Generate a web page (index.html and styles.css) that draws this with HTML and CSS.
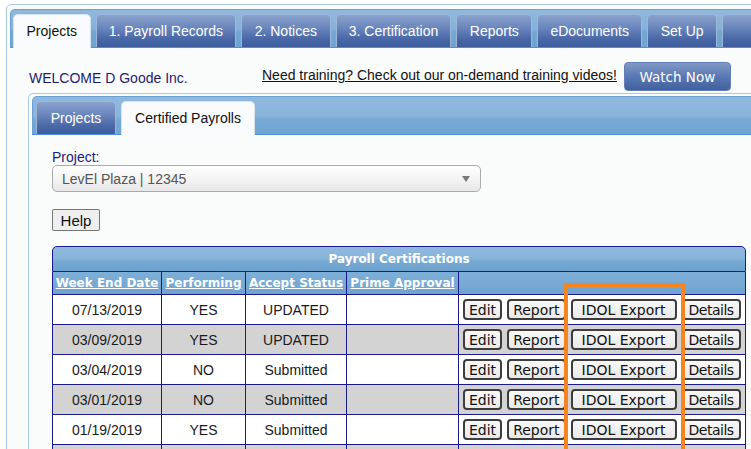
FILE: index.html
```html
<!DOCTYPE html>
<html>
<head>
<meta charset="utf-8">
<link rel="stylesheet" href="styles.css">
</head>
<body>
<div class="app">
  <div class="tabbar">
    <div class="tab active w-projects">Projects</div>
    <div class="tab w-payroll">1. Payroll Records</div>
    <div class="tab w-notices">2. Notices</div>
    <div class="tab w-cert">3. Certification</div>
    <div class="tab w-reports">Reports</div>
    <div class="tab w-edocs">eDocuments</div>
    <div class="tab w-setup">Set Up</div>
    <div class="tab w-more">&nbsp;</div>
  </div>
  <div class="welcome-row">
    <span class="welcome">WELCOME D Goode Inc.</span>
    <a class="training" href="#">Need training? Check out our on-demand training videos!</a>
    <button class="watch">Watch Now</button>
  </div>
  <div class="panel">
    <div class="subtabbar">
      <div class="tab sub w-subproj">Projects</div>
      <div class="tab sub active w-certpay">Certified Payrolls</div>
    </div>
    <div class="panel-body">
      <label class="proj-label">Project:</label>
      <div class="select">
        <span>LevEl Plaza | 12345</span>
        <span class="arrow"></span>
      </div>
      <button class="help">Help</button>
      <table class="grid">
        <colgroup>
          <col class="c1"><col class="c2"><col class="c3"><col class="c4"><col class="c5">
        </colgroup>
        <thead>
          <tr class="caption"><th colspan="5">Payroll Certifications</th></tr>
          <tr class="head">
            <th><a href="#">Week End Date</a></th>
            <th><a href="#">Performing</a></th>
            <th><a href="#">Accept Status</a></th>
            <th><a href="#">Prime Approval</a></th>
            <th></th>
          </tr>
        </thead>
        <tbody>
          <tr>
            <td>07/13/2019</td><td>YES</td><td>UPDATED</td><td></td>
            <td class="actions"><button class="b">Edit</button><button class="b">Report</button><button class="b wide">IDOL Export</button><button class="b last">Details</button></td>
          </tr>
          <tr class="alt">
            <td>03/09/2019</td><td>YES</td><td>UPDATED</td><td></td>
            <td class="actions"><button class="b">Edit</button><button class="b">Report</button><button class="b wide">IDOL Export</button><button class="b last">Details</button></td>
          </tr>
          <tr>
            <td>03/04/2019</td><td>NO</td><td>Submitted</td><td></td>
            <td class="actions"><button class="b">Edit</button><button class="b">Report</button><button class="b wide">IDOL Export</button><button class="b last">Details</button></td>
          </tr>
          <tr class="alt">
            <td>03/01/2019</td><td>NO</td><td>Submitted</td><td></td>
            <td class="actions"><button class="b">Edit</button><button class="b">Report</button><button class="b wide">IDOL Export</button><button class="b last">Details</button></td>
          </tr>
          <tr>
            <td>01/19/2019</td><td>YES</td><td>Submitted</td><td></td>
            <td class="actions"><button class="b">Edit</button><button class="b">Report</button><button class="b wide">IDOL Export</button><button class="b last">Details</button></td>
          </tr>
          <tr class="alt">
            <td></td><td></td><td></td><td></td><td class="actions"></td>
          </tr>
        </tbody>
      </table>
    </div>
  </div>
</div>
<div class="highlight"></div>
</body>
</html>
```
FILE: styles.css
```css
html, body {
  margin: 0;
  padding: 0;
  overflow: hidden;
  background: #ffffff;
  font-family: "Liberation Sans", Arial, sans-serif;
}
body {
  position: relative;
  height: 449px;
}
.app {
  margin: 4px 0 0 6px;
  width: 780px;
  height: 600px;
  border: 1px solid #a9cbe6;
  border-radius: 5px;
  padding: 4px 3px;
  box-sizing: border-box;
  background: #fafcfc;
}
.tabbar {
  display: flex;
  gap: 5px;
  height: 39px;
  box-sizing: border-box;
  padding: 4px 0 0 2px;
  border: 1px solid #6aa0d4;
  border-bottom: 1px solid #4f93d6;
  border-radius: 5px 5px 0 0;
  background: linear-gradient(#8fb9dd 0%, #86b1d8 50%, #73a7d2 60%, #6fa4d0 100%);
}
.tab {
  height: 33px;
  box-sizing: border-box;
  display: flex;
  align-items: center;
  justify-content: center;
  font-size: 14px;
  color: #ffffff;
  border: 1px solid #9db7d9;
  border-bottom: none;
  border-radius: 5px 5px 0 0;
  background: linear-gradient(#8aa2cc 0%, #6a86bd 40%, #4a68a7 75%, #3d5c9b 100%);
  white-space: nowrap;
  padding-bottom: 1px;
}
.tab.active {
  background: #f8fafb;
  color: #111111;
  border-color: #d6e4f0;
  height: 34px;
  margin-bottom: -1px;
}
.w-projects { width: 79px; }
.w-payroll { width: 143px; }
.w-notices { width: 91px; }
.w-cert { width: 118px; }
.w-reports { width: 77px; }
.w-edocs { width: 107px; }
.w-setup { width: 71px; }
.w-more { width: 60px; }
.w-subproj { width: 80px; }
.w-certpay { width: 134px; }

.welcome-row {
  display: flex;
  align-items: center;
  height: 29px;
  margin: 14px 0 2px 19px;
}
.welcome {
  width: 233px;
  flex: none;
  font-size: 14px;
  color: #1e1b6f;
  padding-top: 2px;
}
.training {
  font-size: 14px;
  color: #111111;
  text-decoration: underline;
  margin-top: -3px;
}
.watch {
  margin-left: 7px;
  width: 107px;
  height: 29px;
  border: 1px solid #5f7fb6;
  border-radius: 4px;
  background: linear-gradient(#8099c7 0%, #5d7bb5 45%, #40609f 100%);
  color: #ffffff;
  font-family: "DejaVu Sans", Verdana, sans-serif;
  font-size: 13.5px;
  padding: 0;
}

.panel {
  margin-left: 18px;
  border: 1px solid #a9cbe6;
  border-radius: 5px;
  padding: 2px 3px;
  height: 500px;
  box-sizing: border-box;
}
.subtabbar {
  display: flex;
  gap: 5px;
  height: 39px;
  box-sizing: border-box;
  padding: 4px 0 0 3px;
  border: 1px solid #6aa0d4;
  border-bottom: 1px solid #4f93d6;
  border-radius: 5px 5px 0 0;
  background: linear-gradient(#8fb9dd 0%, #8ab4da 50%, #76a9d3 62%, #70a5d0 100%);
}
.panel-body {
  padding: 14px 0 0 20px;
}
.proj-label {
  display: block;
  font-size: 14px;
  color: #1b1a7c;
  line-height: 16px;
}
.select {
  width: 429px;
  height: 27px;
  box-sizing: border-box;
  border: 1px solid #ababab;
  border-radius: 5px;
  background: linear-gradient(#ffffff 0%, #f4f4f4 50%, #e8e8e8 100%);
  display: flex;
  align-items: center;
  justify-content: space-between;
  padding: 0 10px 0 9px;
  font-size: 14px;
  color: #555555;
}
.arrow {
  width: 0;
  height: 0;
  border-left: 4px solid transparent;
  border-right: 4px solid transparent;
  border-top: 6px solid #7a7a7a;
}
.help {
  display: block;
  margin-top: 17px;
  width: 48px;
  height: 22px;
  padding: 0;
  border: 1px solid #767676;
  border-radius: 2px;
  background: #efefef;
  font-family: "Liberation Sans", Arial, sans-serif;
  font-size: 15px;
  color: #111111;
}

.grid {
  margin-top: 15px;
  width: 694px;
  table-layout: fixed;
  border-collapse: separate;
  border-spacing: 0;
  font-size: 14px;
}
.c1 { width: 110px; }
.c2 { width: 84px; }
.c3 { width: 101px; }
.c4 { width: 112px; }
.c5 { width: 287px; }
.grid th, .grid td {
  border-right: 1px solid #1b1a8c;
  border-bottom: 1px solid #1b1a8c;
  padding: 0;
}
.grid tr > :first-child {
  border-left: 1px solid #1b1a8c;
}
.caption th {
  height: 24px;
  border-top: 1px solid #1b1a8c;
  border-radius: 5px 5px 0 0;
  background: linear-gradient(#8fb9dd 0%, #88b3d9 48%, #75a8d2 58%, #6ea3cf 100%);
  color: #ffffff;
  font-family: "DejaVu Sans", Verdana, sans-serif;
  font-weight: bold;
  font-size: 12px;
  text-align: center;
}
.head th {
  height: 22px;
  background: linear-gradient(#7eafd8, #6fa3d0);
  font-family: "DejaVu Sans", Verdana, sans-serif;
  font-size: 12px;
  font-weight: bold;
  white-space: nowrap;
}
.head th a {
  color: #ffffff;
  text-decoration: underline;
}
.grid td {
  height: 29px;
  text-align: center;
  color: #1a1a1a;
  background: #ffffff;
}
.grid tr.alt td {
  background: #d3d3d3;
}
.grid td.actions {
  text-align: left;
  padding-left: 4px;
  white-space: nowrap;
}
.b {
  height: 21px;
  margin-right: 5px;
  padding: 0 4px;
  border: 2px solid #3d3d3d;
  border-radius: 4px;
  background: linear-gradient(#f8f8f8, #e9e9e9);
  font-family: "DejaVu Sans", Verdana, sans-serif;
  font-size: 14px;
  line-height: 16px;
  color: #111111;
  vertical-align: middle;
}
.b.wide {
  padding: 0 9px;
}
.b.last {
  margin-right: 0;
  padding: 0 5px 0 5px;
  letter-spacing: -0.5px;
}
.highlight {
  position: absolute;
  left: 564px;
  top: 283px;
  width: 121px;
  height: 220px;
  box-sizing: border-box;
  border: 4px solid #f7841f;
}
```
